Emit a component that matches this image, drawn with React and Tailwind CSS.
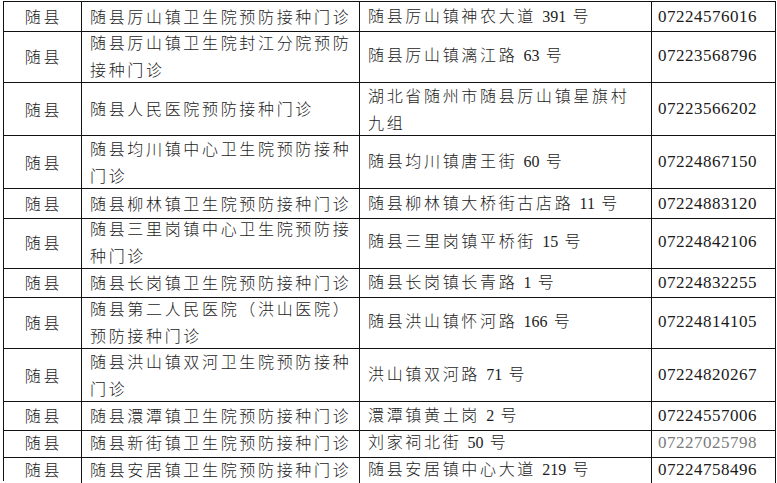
import React from "react";

const rows = [
  { h: 27, name: ["随县厉山镇卫生院预防接种门诊"], addr: [["随县厉山镇神农大道 ", "391", " 号"]], tel: "07224576016" },
  { h: 53, name: ["随县厉山镇卫生院封江分院预防", "接种门诊"], addr: [["随县厉山镇漓江路 ", "63", " 号"]], tel: "07223568796" },
  { h: 53, name: ["随县人民医院预防接种门诊"], addr: [["湖北省随州市随县厉山镇星旗村"], ["九组"]], tel: "07223566202" },
  { h: 54, name: ["随县均川镇中心卫生院预防接种", "门诊"], addr: [["随县均川镇唐王街 ", "60", " 号"]], tel: "07224867150" },
  { h: 26, name: ["随县柳林镇卫生院预防接种门诊"], addr: [["随县柳林镇大桥街古店路 ", "11", " 号"]], tel: "07224883120" },
  { h: 53, name: ["随县三里岗镇中心卫生院预防接", "种门诊"], addr: [["随县三里岗镇平桥街 ", "15", " 号"]], tel: "07224842106" },
  { h: 27, name: ["随县长岗镇卫生院预防接种门诊"], addr: [["随县长岗镇长青路 ", "1", " 号"]], tel: "07224832255" },
  { h: 53, name: ["随县第二人民医院（洪山医院）", "预防接种门诊"], addr: [["随县洪山镇怀河路 ", "166", " 号"]], tel: "07224814105" },
  { h: 53, name: ["随县洪山镇双河卫生院预防接种", "门诊"], addr: [["洪山镇双河路 ", "71", " 号"]], tel: "07224820267" },
  { h: 27, name: ["随县澴潭镇卫生院预防接种门诊"], addr: [["澴潭镇黄土岗 ", "2", " 号"]], tel: "07224557006" },
  { h: 27, name: ["随县新街镇卫生院预防接种门诊"], addr: [["刘家祠北街 ", "50", " 号"]], tel: "07227025798", gray: true },
  { h: 26, name: ["随县安居镇卫生院预防接种门诊"], addr: [["随县安居镇中心大道 ", "219", " 号"]], tel: "07224758496" },
];

const cjk = "font-['Noto_Sans_CJK_SC',sans-serif] font-light text-[16px] tracking-[2.67px] text-[#1c1c1c]";
const num = "font-['Liberation_Serif','Times_New_Roman',serif] font-normal text-[16px] tracking-[0px]";

function AddrLine({ parts }) {
  return (
    <div className="whitespace-nowrap leading-[26.5px]">
      {parts.map((p, i) =>
        i === 1 ? (
          <span key={i} className={num}>{p}</span>
        ) : (
          <span key={i}>{p}</span>
        )
      )}
    </div>
  );
}

export default function App() {
  const cols = "grid grid-cols-[78px_278px_292px_124px]";
  return (
    <div className="w-[777px] h-[483px] bg-white pt-[1px] pl-[3px] text-[#111]">
      <div className="w-[773px] border-l border-t border-[#111]">
        {rows.map((r, idx) => (
          <div key={idx} className={cols} style={{ height: r.h }}>
            <div className={`flex items-center justify-center border-r border-b border-[#111] pl-[2px] ${cjk}`}>
              随县
            </div>
            <div className={`flex flex-col justify-center border-r border-b border-[#111] pl-[8px] ${cjk}`}>
              {r.name.map((l, i) => (
                <div key={i} className="whitespace-nowrap leading-[26.5px]">{l}</div>
              ))}
            </div>
            <div className={`flex flex-col justify-center border-r border-b border-[#111] pl-[8px] ${cjk}`}>
              {r.addr.map((p, i) => (
                <AddrLine key={i} parts={p} />
              ))}
            </div>
            <div
              className={`flex items-center border-r border-b border-[#111] pl-[6px] font-['Liberation_Serif','Times_New_Roman',serif] text-[17px] tracking-[0.5px] ${
                r.gray ? "text-[#7a7a7a]" : "text-[#1a1a1a]"
              }`}
            >
              {r.tel}
            </div>
          </div>
        ))}
      </div>
    </div>
  );
}
